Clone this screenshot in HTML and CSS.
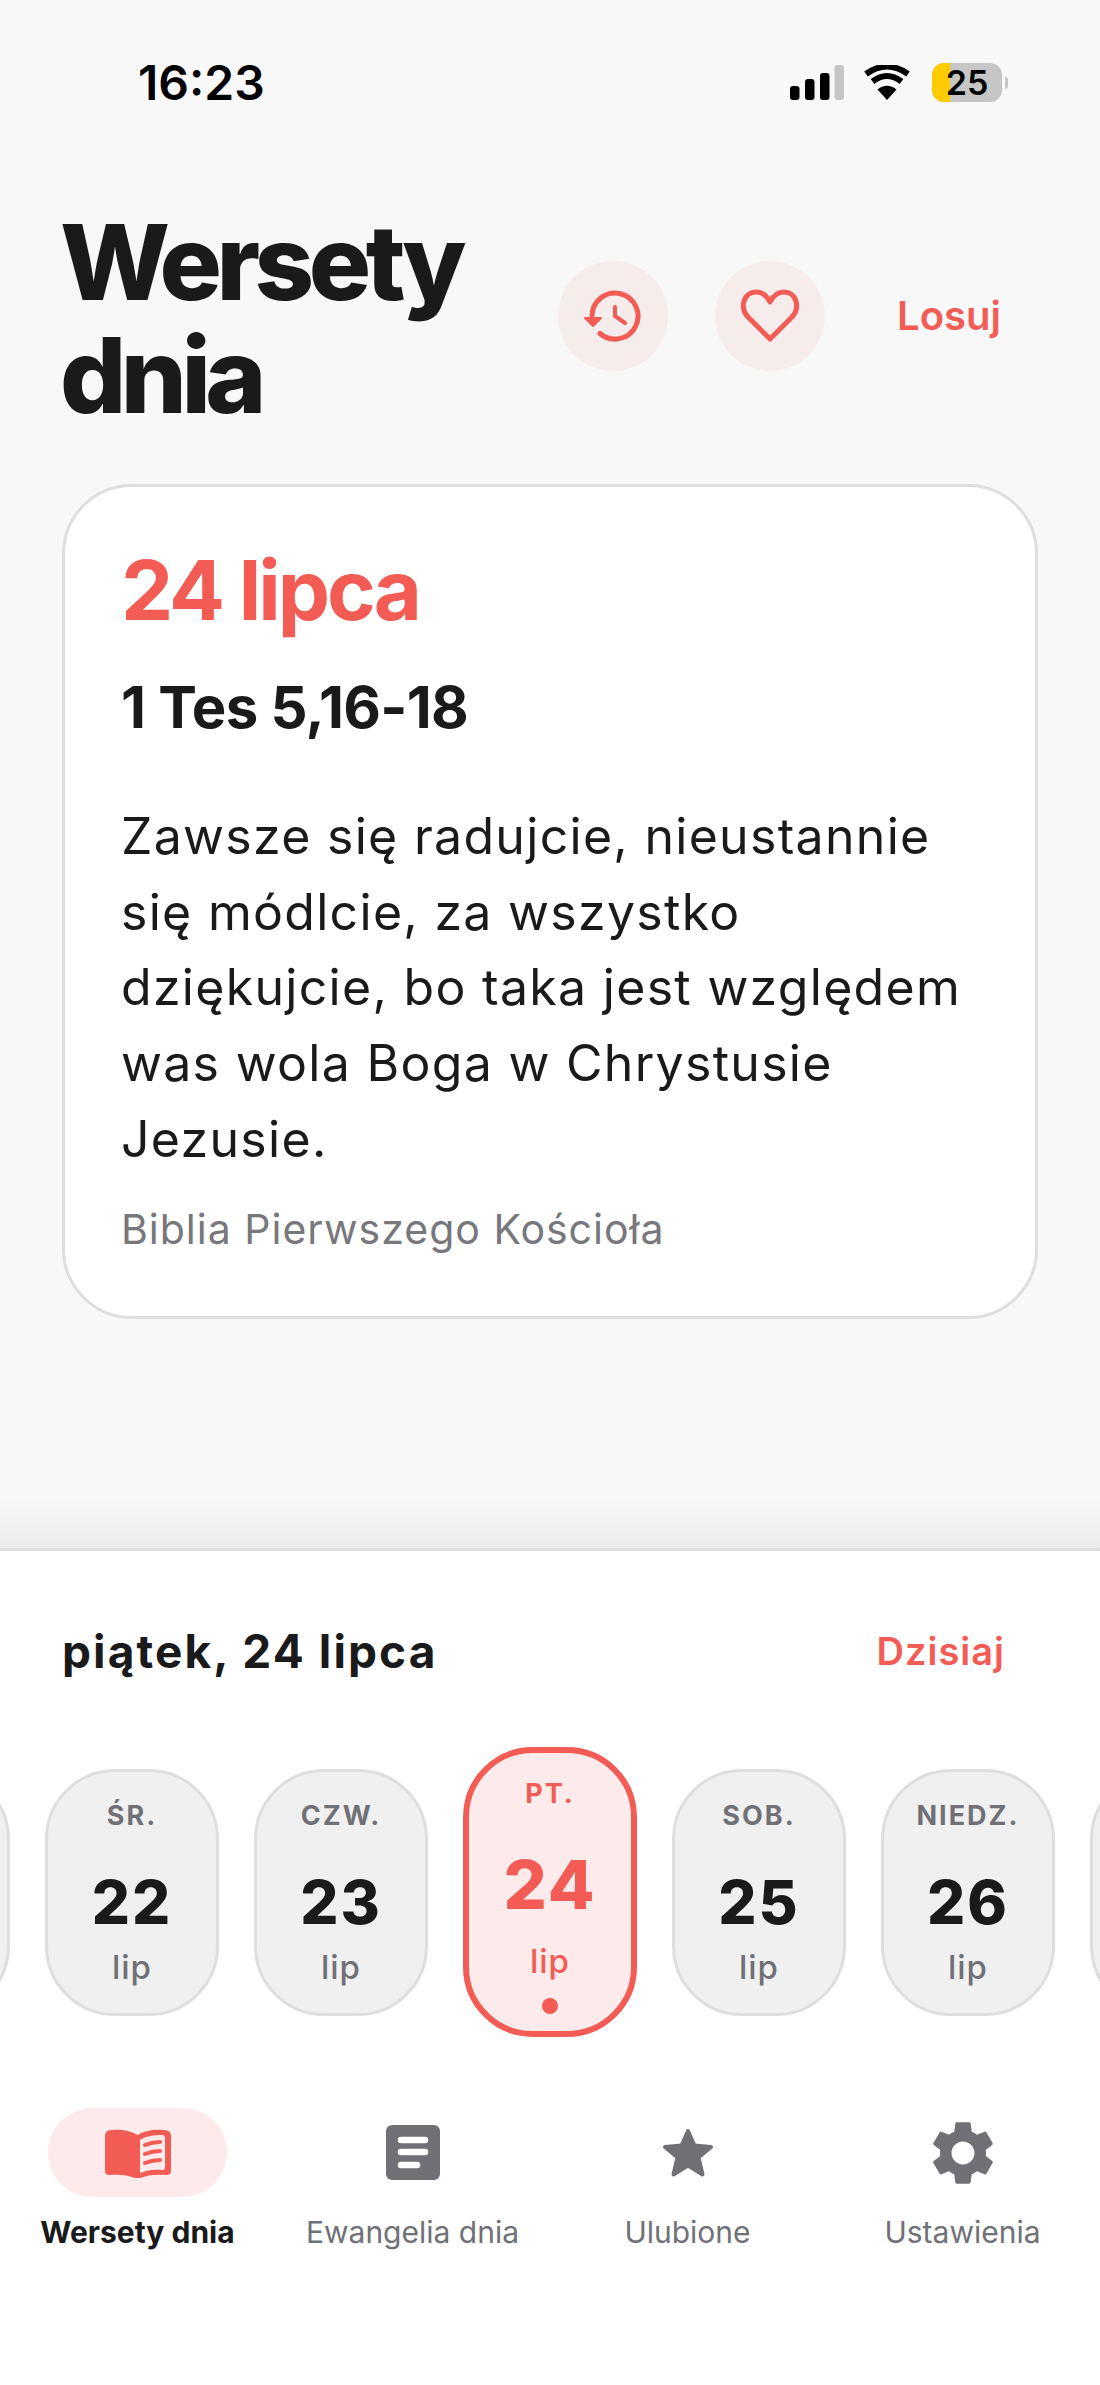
FILE: index.html
```html
<!DOCTYPE html>
<html lang="pl">
<head>
  <meta charset="UTF-8" />
  <title>Wersety dnia</title>
  <link rel="stylesheet" href="styles.css">
</head>
<body>
  <div class="page">
    <div class="status-bar">
      <span class="time">16:23</span>
      <div class="status-icons">
        <svg class="signal" width="54" height="35" viewBox="0 0 54 35">
          <rect x="0" y="21" width="9.5" height="14" rx="3" fill="#000"/>
          <rect x="15" y="14" width="9.5" height="21" rx="3" fill="#000"/>
          <rect x="30" y="8" width="9.5" height="27" rx="3" fill="#000"/>
          <rect x="44.5" y="0" width="9.5" height="35" rx="3" fill="#c6c6c6"/>
        </svg>
        <svg class="wifi" width="48" height="36" viewBox="0 0 48 36">
          <path d="M24 35 L14.5 24.5 Q24 17 33.5 24.5 Z" fill="#000"/>
          <path d="M9.5 16.5 Q24 5.5 38.5 16.5" fill="none" stroke="#000" stroke-width="6"/>
          <path d="M3 9 Q24 -6 45 9" fill="none" stroke="#000" stroke-width="6"/>
        </svg>
        <div class="battery">
          <div class="battery-body"><span class="battery-level"></span><span class="battery-text">25</span></div>
          <span class="battery-nub"></span>
        </div>
      </div>
    </div>

    <div class="header">
      <h1 class="title">Wersety<br>dnia</h1>
      <div class="header-actions">
        <button class="round-btn">
          <svg width="60" height="54" viewBox="0 0 60 54" fill="none" stroke="#f25c54" stroke-width="5" stroke-linecap="round" stroke-linejoin="round">
            <path d="M9 27 A23 23 0 1 1 17 44.500"/>
            <path d="M32 18 V27 L42 34" stroke-width="4"/>
            <path d="M2 29 H18 L10 37 Z" fill="#f25c54" stroke-width="2"/>
          </svg>
        </button>
        <button class="round-btn">
          <svg width="60" height="54" viewBox="0 0 60 54" fill="none" stroke="#f25c54" stroke-width="5" stroke-linejoin="round">
            <path d="M30 50 L8 28 C-1 18 4 3 16 3 C22 3 27 7 30 13 C33 7 38 3 44 3 C56 3 61 18 52 28 Z"/>
          </svg>
        </button>
        <span class="random-link">Losuj</span>
      </div>
    </div>

    <div class="card">
      <div class="card-date">24 lipca</div>
      <div class="card-ref">1 Tes 5,16-18</div>
      <p class="card-verse">Zawsze się radujcie, nieustannie się módlcie, za wszystko dziękujcie, bo taka jest względem was wola Boga w Chrystusie Jezusie.</p>
      <div class="card-source">Biblia Pierwszego Kościoła</div>
    </div>

    <div class="spacer"></div>
    <div class="sheet-fade"></div>

    <div class="sheet">
      <div class="sheet-head">
        <span class="sheet-date">piątek, 24 lipca</span>
        <span class="today-link">Dzisiaj</span>
      </div>

      <div class="days">
        <div class="day"><span class="day-name">WT.</span><span class="day-num">21</span><span class="day-month">lip</span></div>
        <div class="day"><span class="day-name">ŚR.</span><span class="day-num">22</span><span class="day-month">lip</span></div>
        <div class="day"><span class="day-name">CZW.</span><span class="day-num">23</span><span class="day-month">lip</span></div>
        <div class="day day-active"><span class="day-name">PT.</span><span class="day-num">24</span><span class="day-month">lip</span><span class="day-dot"></span></div>
        <div class="day"><span class="day-name">SOB.</span><span class="day-num">25</span><span class="day-month">lip</span></div>
        <div class="day"><span class="day-name">NIEDZ.</span><span class="day-num">26</span><span class="day-month">lip</span></div>
        <div class="day"><span class="day-name">PON.</span><span class="day-num">27</span><span class="day-month">lip</span></div>
      </div>

      <nav class="tabs">
        <div class="tab tab-active">
          <div class="tab-icon">
            <svg width="68" height="50" viewBox="0 0 68 50">
              <path d="M1 8 C1 4 4 2 8 2 C18 1 27 3 33.500 7 C40 3 49 1 60 2 C64 2 67 4 67 8 V43 C67 46 65 47 62 47 C52 46 43 47 36 50 H31 C24 47 15 46 6 47 C3 47 1 46 1 43 Z" fill="#f25c54"/>
              <path d="M36 12 C42 8 50 7 58 7 C60 7 61 8 61 10 V40 C61 41 60 42 58 42 C50 41 43 42 36 45 Z" fill="#fdeaea"/>
              <g fill="none" stroke="#f25c54" stroke-width="4" stroke-linecap="round">
                <path d="M41 17 C46 15 51 14 56 14"/>
                <path d="M41 26 C46 24 51 23 56 23"/>
                <path d="M41 35 C46 33 51 32 56 32"/>
              </g>
            </svg>
          </div>
          <span class="tab-label">Wersety dnia</span>
        </div>
        <div class="tab">
          <div class="tab-icon">
            <svg width="54" height="55" viewBox="0 0 54 55">
              <rect width="54" height="55" rx="6" fill="#707176"/>
              <g stroke="#fff" stroke-width="6.500" stroke-linecap="round">
                <path d="M15 15 H39"/>
                <path d="M15 27 H39"/>
                <path d="M15 40 H31"/>
              </g>
            </svg>
          </div>
          <span class="tab-label">Ewangelia dnia</span>
        </div>
        <div class="tab">
          <div class="tab-icon">
            <svg width="52" height="50" viewBox="0 0 52 50">
              <polygon points="26,3 32.500,17.500 49,19 36.500,29.500 40.500,46.500 26,37.500 11.500,46.500 15.500,29.500 3,19 19.500,17.500" fill="#707176" stroke="#707176" stroke-width="4" stroke-linejoin="round"/>
            </svg>
          </div>
          <span class="tab-label">Ulubione</span>
        </div>
        <div class="tab">
          <div class="tab-icon">
            <svg width="60" height="64" viewBox="2.600 2 18.800 20">
              <path fill="#707176" d="M19.140 12.940c.04-.3.06-.61.06-.94 0-.32-.02-.64-.07-.94l2.030-1.580a.49.49 0 0 0 .12-.61l-1.920-3.320a.488.488 0 0 0-.59-.22l-2.390.96c-.5-.38-1.030-.7-1.620-.94l-.36-2.540a.484.484 0 0 0-.48-.41h-3.840c-.24 0-.43.17-.47.41l-.36 2.540c-.59.24-1.130.57-1.620.94l-2.390-.96c-.22-.08-.47 0-.59.22L2.740 8.870c-.12.21-.08.47.12.61l2.030 1.580c-.05.3-.09.63-.09.94s.02.64.07.94l-2.030 1.580a.49.49 0 0 0-.12.61l1.920 3.320c.12.22.37.29.59.22l2.390-.96c.5.38 1.030.7 1.620.94l.36 2.540c.05.24.24.41.48.41h3.840c.24 0 .44-.17.47-.41l.36-2.540c.59-.24 1.130-.56 1.620-.94l2.390.96c.22.08.47 0 .59-.22l1.920-3.320c.12-.22.07-.47-.12-.61l-2.010-1.580zM12 15.600c-1.980 0-3.600-1.620-3.600-3.600s1.620-3.600 3.600-3.600 3.600 1.620 3.600 3.600-1.620 3.600-3.600 3.600z"/>
            </svg>
          </div>
          <span class="tab-label">Ustawienia</span>
        </div>
      </nav>
    </div>
  </div>
</body>
</html>
```

FILE: styles.css
```css
* {
  box-sizing: border-box;
}

body {
  margin: 0;
  font-family: 'Inter', 'Liberation Sans', sans-serif;
  color: #1a1a1c;
  background: #f8f8f9;
}

.page {
  display: flex;
  flex-direction: column;
  height: 2385px;
  overflow: hidden;
}

/* status bar */
.status-bar {
  display: flex;
  justify-content: space-between;
  align-items: center;
  height: 39px;
  margin-top: 63px;
  padding: 0 92px 0 138px;
}

.time {
  font-size: 48px;
  font-weight: 600;
  color: #000;
}

.status-icons {
  display: flex;
  align-items: center;
  gap: 21px;
}

.signal {
  margin-right: -2px;
}

.battery {
  display: flex;
  align-items: center;
  gap: 3px;
}

.battery-body {
  position: relative;
  display: flex;
  justify-content: center;
  align-items: center;
  width: 70px;
  height: 39px;
  border-radius: 12px;
  background: #c6c6c6;
  overflow: hidden;
}

.battery-level {
  position: absolute;
  left: 0;
  top: 0;
  bottom: 0;
  width: 18px;
  background: #ffcc00;
}

.battery-text {
  position: relative;
  font-size: 34px;
  font-weight: 600;
  color: #000;
}

.battery-nub {
  width: 3px;
  height: 12px;
  border-radius: 0 3px 3px 0;
  background: #c6c6c6;
}

/* header */
.header {
  display: flex;
  justify-content: space-between;
  align-items: center;
  margin-top: 100px;
  padding: 0 99px 0 60px;
}

.title {
  margin: 0;
  padding-top: 4px;
  font-size: 104px;
  line-height: 113px;
  font-weight: 800;
  letter-spacing: -5.500px;
}

.header-actions {
  display: flex;
  align-items: center;
  margin-bottom: 3px;
}

.round-btn {
  display: flex;
  justify-content: center;
  align-items: center;
  width: 110px;
  height: 110px;
  margin-right: 47px;
  padding: 0;
  border: none;
  border-radius: 50%;
  background: #f7ecec;
}

.random-link {
  margin-left: 25px;
  font-size: 40px;
  font-weight: 600;
  color: #f25c54;
}

/* card */
.card {
  margin: 52px 62px 0;
  height: 835px;
  padding: 53px 56px 0;
  background: #fff;
  border: 3px solid #dedede;
  border-radius: 70px;
}

.card-date {
  font-size: 83px;
  line-height: 100px;
  font-weight: 700;
  letter-spacing: -3px;
  color: #f25c54;
}

.card-ref {
  margin-top: 33px;
  font-size: 58px;
  line-height: 68px;
  font-weight: 700;
  letter-spacing: -0.700px;
}

.card-verse {
  margin: 58px 0 0;
  font-size: 50px;
  line-height: 75.700px;
  letter-spacing: 1.300px;
}

.card-source {
  margin-top: 21px;
  font-size: 41px;
  line-height: 60px;
  letter-spacing: 1px;
  color: #77777c;
}

.spacer {
  flex: 1;
}

.sheet-fade {
  height: 50px;
  background: linear-gradient(to bottom, rgba(0, 0, 0, 0), rgba(0, 0, 0, 0.05));
}

/* bottom sheet */
.sheet {
  height: 837px;
  background: #fff;
  border-top: 3px solid #dedede;
}

.sheet-head {
  display: flex;
  justify-content: space-between;
  align-items: center;
  height: 60px;
  margin-top: 70px;
  padding: 0 95px 0 62px;
}

.sheet-date {
  font-size: 46px;
  font-weight: 700;
  letter-spacing: 2.100px;
}

.today-link {
  font-size: 38px;
  font-weight: 600;
  letter-spacing: 1px;
  color: #f25c54;
}

.days {
  display: flex;
  justify-content: center;
  align-items: center;
  gap: 35px;
  height: 290px;
  margin-top: 66px;
  overflow: hidden;
}

.day {
  display: flex;
  flex-direction: column;
  align-items: center;
  flex: none;
  width: 174px;
  height: 247px;
  padding-top: 28px;
  background: #f0f0f1;
  border: 3px solid #dedede;
  border-radius: 70px;
}

.day-name {
  font-size: 27px;
  line-height: 32px;
  font-weight: 700;
  letter-spacing: 2px;
  color: #707176;
}

.day-num {
  margin-top: 34px;
  font-size: 60px;
  line-height: 72px;
  font-weight: 800;
  letter-spacing: 2px;
}

.day-month {
  margin-top: 10px;
  font-size: 33px;
  line-height: 38px;
  font-weight: 500;
  letter-spacing: 1px;
  color: #707176;
}

.day-active {
  height: 290px;
  padding-top: 25px;
  background: #fdeaea;
  border: 6px solid #f25c54;
  color: #f25c54;
}

.day-active .day-name,
.day-active .day-month {
  color: #f25c54;
}

.day-active .day-num {
  margin-top: 38px;
  font-size: 68px;
}

.day-active .day-month {
  margin-top: 22px;
}

.day-dot {
  width: 16px;
  height: 16px;
  margin-top: 18px;
  border-radius: 50%;
  background: #f25c54;
}

/* tab bar */
.tabs {
  display: grid;
  grid-template-columns: repeat(4, 1fr);
  margin-top: 71px;
}

.tab {
  display: flex;
  flex-direction: column;
  align-items: center;
}

.tab-icon {
  display: flex;
  justify-content: center;
  align-items: center;
  width: 179px;
  height: 89px;
  border-radius: 45px;
}

.tab-active .tab-icon {
  background: #fdeaea;
}

.tab-label {
  margin-top: 14px;
  font-size: 30px;
  line-height: 42px;
  color: #707176;
}

.tab-active .tab-label {
  font-weight: 700;
  color: #1a1a1c;
}
```
